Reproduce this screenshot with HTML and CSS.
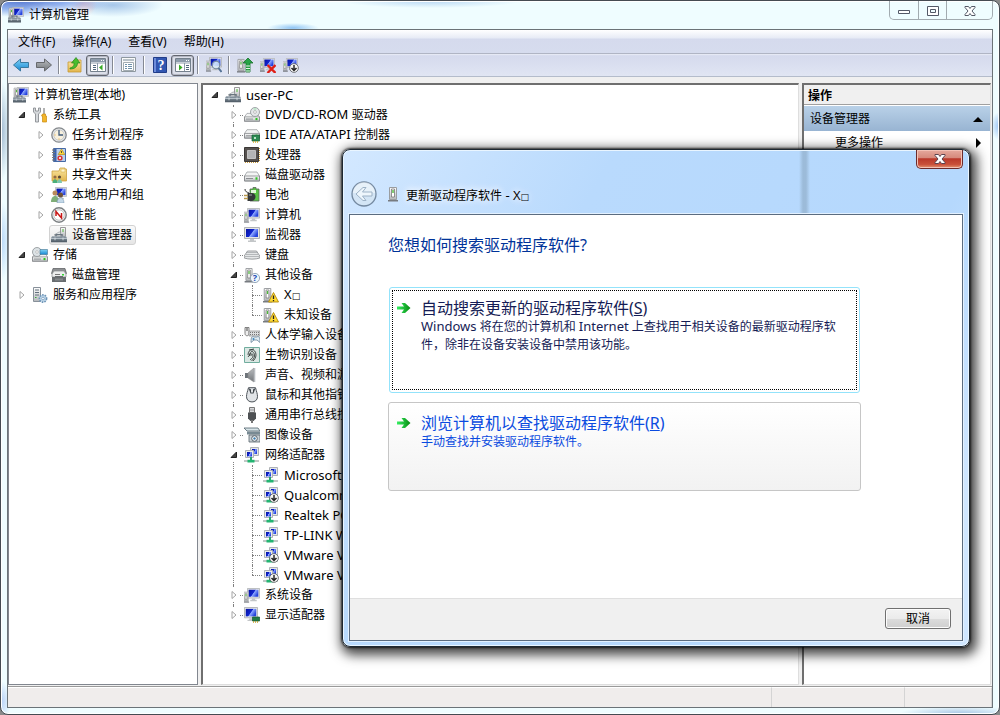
FILE: index.html
```html
<!DOCTYPE html>
<html lang="zh-CN">
<head>
<meta charset="utf-8">
<title>计算机管理</title>
<link rel="stylesheet" href="styles.css">
</head>
<body>
<svg class="sprite" aria-hidden="true">
  <defs>
    <linearGradient id="g-screen" x1="0" y1="0" x2="1" y2="0.5"><stop offset="0" stop-color="#0512a0"/><stop offset="0.55" stop-color="#1226cf"/><stop offset="0.62" stop-color="#8fa9ff"/><stop offset="1" stop-color="#2744dd"/></linearGradient>
    <linearGradient id="g-metal" x1="0" y1="0" x2="0" y2="1"><stop offset="0" stop-color="#ffffff"/><stop offset="1" stop-color="#b4b7ba"/></linearGradient>
    <linearGradient id="g-dark" x1="0" y1="0" x2="0" y2="1"><stop offset="0" stop-color="#93a0ab"/><stop offset="1" stop-color="#4c5862"/></linearGradient>
    <linearGradient id="g-blue" x1="0" y1="0" x2="0" y2="1"><stop offset="0" stop-color="#7fd2f7"/><stop offset="1" stop-color="#1787d2"/></linearGradient>
    <linearGradient id="g-gray" x1="0" y1="0" x2="0" y2="1"><stop offset="0" stop-color="#b9bcbf"/><stop offset="1" stop-color="#73777b"/></linearGradient>
    <linearGradient id="g-folder" x1="0" y1="0" x2="0" y2="1"><stop offset="0" stop-color="#fbe9a6"/><stop offset="1" stop-color="#e2b54c"/></linearGradient>
    <linearGradient id="g-green" x1="0" y1="0" x2="1" y2="0"><stop offset="0" stop-color="#35ef62"/><stop offset="1" stop-color="#078a10"/></linearGradient>
  </defs>
  <symbol id="monitor" viewBox="0 0 16 16" preserveAspectRatio="none"><path d="M.500.500h15v11H.500z" fill="#e4e5e6" stroke="#b0b3b5"/><path d="M2 2h12v8H2z" fill="url(#g-screen)"/><path d="M6 12h4v1.500h2V15H4v-1.500h2z" fill="#c3c6c8"/></symbol>
  <symbol id="tower" viewBox="0 0 16 16" preserveAspectRatio="none"><path d="M4.500 1.500h7v12h-7z" fill="url(#g-metal)" stroke="#9a9da0"/><path d="M6.500 3h3v8h-3z" fill="#fff" stroke="#777" stroke-width=".8"/><path d="M7.300 4h1.400v3H7.300z" fill="#4eb83a"/><path d="M3 14h10v1.500H3z" fill="#777b80"/></symbol>
  <symbol id="toolbox" viewBox="0 0 16 16" preserveAspectRatio="none"><path d="M1 6h14l1 3v6H0V9z" fill="url(#g-dark)"/><path d="M5 6V3.500h6V6" fill="none" stroke="#69757f" stroke-width="1.500"/><path d="M0 9.500h16" stroke="#c5ced5"/><path d="M4 8v4M12 8v4" stroke="#dce2e6"/></symbol>
  <symbol id="i-manage" viewBox="0 0 16 16"><use href="#monitor" x="4" y="0" width="12" height="13"/><use href="#tower" x="-2" y="0" width="11" height="12"/><use href="#toolbox" x="0" y="7" width="13" height="9"/></symbol>
  <symbol id="i-tools" viewBox="0 0 16 16"><path d="M1.500 1v4l2 2v8h3V7l2-2V1L6.500 1v3h-3V1z" fill="#d6d9dc" stroke="#8b8f93" stroke-width=".9"/><path d="M12 1v6" stroke="#999" stroke-width="1.500"/><path d="M10.500 7h3v2h1v6h-4V9h-1z" fill="#f3b62a" stroke="#c98a10" stroke-width=".7"/></symbol>
  <symbol id="i-clock" viewBox="0 0 16 16"><circle cx="8" cy="8" r="7.200" fill="#e6e8ea" stroke="#85898d" stroke-width="1.300"/><circle cx="8" cy="8" r="5.200" fill="#f7f0dd" stroke="#b9bdc0" stroke-width=".7"/><path d="M8 3v5h4" fill="none" stroke="#3f5a7c" stroke-width="1.300"/><path d="M3.500 8h1M8 11.500v1" stroke="#e6a93a"/></symbol>
  <symbol id="i-event" viewBox="0 0 16 16"><path d="M2.500 1.500h12v13h-12z" fill="#b9d0ed" stroke="#4669a5"/><path d="M3 2h2.500v12H3z" fill="#3b63ae"/><path d="M1 3h3M1 5.500h3M1 8h3M1 10.500h3M1 13h3" stroke="#777"/><path d="M10.500 2l3.300 5.500H7.200z" fill="#ffd83b" stroke="#b28400" stroke-width=".6"/><path d="M10.500 4v2" stroke="#333" stroke-width=".8"/><circle cx="9" cy="11" r="2.600" fill="#d93535"/><path d="M8 10l2 2M10 10l-2 2" stroke="#fff" stroke-width=".8"/></symbol>
  <symbol id="i-share" viewBox="0 0 16 16"><path d="M1 4h7l1-3h5v1h1.500v12H1z" fill="url(#g-folder)" stroke="#cda341" stroke-width=".8"/><path d="M10 2h4v3h-4z" fill="#fff6cc" stroke="#d2a43b" stroke-width=".5"/><circle cx="4" cy="10" r="1.600" fill="#936c45"/><circle cx="8.500" cy="10" r="1.600" fill="#5c4b38"/><path d="M1.500 16c0-5 5-5 5 0z" fill="#4baf79"/><path d="M6 16c0-5 5-5 5 0z" fill="#7fc8b0"/></symbol>
  <symbol id="i-users" viewBox="0 0 16 16"><use href="#monitor" x="4" y="0" width="12" height="13"/><circle cx="4" cy="6" r="2.500" fill="#b98a5a"/><circle cx="9.500" cy="8" r="2.500" fill="#6e5138"/><path d="M0 15c0-8 8-8 8 0z" fill="#7fae78"/><path d="M6 16c0-7 7-7 7 0z" fill="#c3d8e8" stroke="#6e8da8" stroke-width=".5"/></symbol>
  <symbol id="i-perf" viewBox="0 0 16 16"><circle cx="8" cy="8" r="7.200" fill="#f2f2f2" stroke="#7c8083" stroke-width="1.400"/><circle cx="8" cy="8" r="5.200" fill="#fff" stroke="#b2b6b9" stroke-width=".8"/><path d="M5 9V4.500L10.500 11V6" fill="none" stroke="#c81616" stroke-width="1.500"/></symbol>
  <symbol id="i-device" viewBox="0 0 16 16"><path d="M9.500.500h5v9h-5z" fill="url(#g-metal)" stroke="#999"/><path d="M12 2v3" stroke="#4fb63b"/><path d="M3 8l5-3h1.500v4z" fill="#e2e5e7" stroke="#8b9094" stroke-width=".6"/><use href="#toolbox" x="0" y="5" width="16" height="11"/></symbol>
  <symbol id="drive" viewBox="0 0 16 16" preserveAspectRatio="none"><path d="M3 5h10l2.500 4v5H.500V9z" fill="#f3f4f4" stroke="#9b9ea1" stroke-width=".8"/><path d="M.500 9h15v5H.500z" fill="url(#g-metal)" stroke="#808386" stroke-width=".8"/><path d="M2 11.500h7" stroke="#8b8e91"/><path d="M11.500 10.300h2v2.400h-2z" fill="#2fc424"/></symbol>
  <symbol id="i-storage" viewBox="0 0 16 16"><use href="#drive" y="2" width="16" height="14"/><circle cx="5" cy="5" r="4.500" fill="#dde3e6" stroke="#8c9194" stroke-width=".8"/><circle cx="5" cy="5" r="1.300" fill="#fff" stroke="#999" stroke-width=".5"/><path d="M8 2.500h7.500v5H8z" fill="url(#g-blue)" stroke="#457390" stroke-width=".6"/></symbol>
  <symbol id="i-disk" viewBox="0 0 16 16"><path d="M2 1.500h12l1.500 5h-15z" fill="#8d9092" stroke="#55585b" stroke-width=".7"/><path d="M3 4h10l2 3v3H1V7z" fill="#eceded" stroke="#888b8d" stroke-width=".7"/><path d="M4 7.500h5" stroke="#777"/><path d="M1 10h3v-1h8v1h3v5H1z" fill="#686c6f"/><path d="M4 11.500h8v2H4z" fill="#85898c"/><path d="M11 7h2v1.500h-2z" fill="#36d436"/></symbol>
  <symbol id="i-services" viewBox="0 0 16 16"><path d="M1.500.500h7v14h-7z" fill="url(#g-metal)" stroke="#88919a"/><path d="M3 3h4M3 5.500h4M3 8h4" stroke="#62707d"/><path d="M3 10h1.500v1H3z" fill="#38aa3c"/><circle cx="11" cy="11.500" r="3.600" fill="#bdd5e9" stroke="#6e95b7" stroke-width="1.600" stroke-dasharray="1.600 1"/><circle cx="11" cy="11.500" r="1.300" fill="#fff" stroke="#6e95b7" stroke-width=".7"/></symbol>
  <symbol id="i-dvd" viewBox="0 0 16 16"><use href="#drive" y="2" width="16" height="14"/><circle cx="11" cy="5" r="4.500" fill="#e4e7e9" stroke="#8b9094" stroke-width=".8"/><path d="M11 5l-2-4h4z" fill="#bfe4ca"/><circle cx="11" cy="5" r="1.400" fill="#fff" stroke="#999" stroke-width=".6"/></symbol>
  <symbol id="i-ide" viewBox="0 0 16 16"><use href="#drive" y="-2" width="16" height="15"/><path d="M8 8h7.500v6H8z" fill="#2c8a52" stroke="#145c30" stroke-width=".7"/><path d="M9 15h6" stroke="#d5ad2b" stroke-width="1.500" stroke-dasharray="1 1"/><path d="M10 10h2v2h-2z" fill="#b9e3c6"/></symbol>
  <symbol id="i-cpu" viewBox="0 0 16 16"><path d="M1 15.300h14M15.300 1v14" stroke="#c89b3e" stroke-width="1.400" stroke-dasharray="1 1"/><path d="M.500.500h14v14H.500z" fill="#55514e" stroke="#3b3836"/><path d="M3.500 3.500h8v8h-8z" fill="#b4b5b6" stroke="#dedede" stroke-width=".7"/></symbol>
  <symbol id="i-battery" viewBox="0 0 16 16"><path d="M6 2h3V.500h3V2h3v12H6z" fill="#58c244" stroke="#5b655a" stroke-width=".8"/><path d="M7 3h5v3H7z" fill="#e1f7d9"/><path d="M1 2c0 3 2 3 4 4" fill="none" stroke="#333"/><path d="M3.500 6h4c3 0 4 2 4 4s-2 4-4 4h-4z" fill="#34383a"/><path d="M5 8h3" stroke="#9da2a5"/><path d="M0 8.500h4M0 11.500h4" stroke="#b9984b" stroke-width="1.300"/></symbol>
  <symbol id="i-pc" viewBox="0 0 16 16"><use href="#monitor" x="3" y="1" width="13" height="14"/><use href="#tower" x="-3" y="4" width="10" height="12"/></symbol>
  <symbol id="i-keyboard" viewBox="0 0 16 16"><path d="M3.500 4h9l3.300 5v2c-4 1.500-11.600 1.500-15.600 0V9z" fill="#e5e7e8" stroke="#85898c" stroke-width=".8"/><path d="M3.500 5.500h9M2.500 7.500h11M1.500 9.500h13" stroke="#85898c" stroke-dasharray="1 1"/></symbol>
  <symbol id="i-other" viewBox="0 0 16 16"><use href="#tower" x="-2" y="0" width="14" height="16"/><circle cx="11" cy="11" r="4.600" fill="#eef5fc" stroke="#8296aa" stroke-width=".8"/></symbol>
  <symbol id="i-warn" viewBox="0 0 16 16"><use href="#tower" x="-3" y="0" width="15" height="16"/><path d="M10.500 5.500l5 9.500h-10z" fill="#ffdb36" stroke="#b58a08" stroke-width=".9" stroke-linejoin="round"/><path d="M10.500 8.500v3.500M10.500 13v1.200" stroke="#222" stroke-width="1.300"/></symbol>
  <symbol id="i-hid" viewBox="0 0 16 16"><path d="M1 .500h4v6c0 3-4 3-4 0z" fill="#eee" stroke="#666" stroke-width=".8"/><path d="M3 1v3" stroke="#444"/><path d="M5 4h11v5H5z" fill="#dcdedf" stroke="#888" stroke-width=".7"/><path d="M6 5.500h9M6 7.500h9" stroke="#777" stroke-dasharray="1 1"/><path d="M7 15.500c0-6 1-6.500 3.500-5.500h2c2.500-1 3.500-.5 3.500 5.500l-3-2.500h-3z" fill="#e1edf3" stroke="#688399" stroke-width=".8"/><circle cx="9.500" cy="12" r="1" fill="#3c83b9"/></symbol>
  <symbol id="i-finger" viewBox="0 0 16 16"><path d="M.500.500h15v15H.500z" fill="#dae7e3" stroke="#71ad9e"/><path d="M4 8c0-7 8-7 8 0 0 3-2 5-3 6M5.500 9c0-6 5-6 5 0 0 2-2 4-3 5M7 9c0-3 2-3 2 0 0 2-2 3-3 4M4 10l3-4M5 3l5-1" fill="none" stroke="#383d3c" stroke-width=".9"/></symbol>
  <symbol id="i-sound" viewBox="0 0 16 16"><path d="M1 6h3v5H1z" fill="#6e747a"/><path d="M4 6l6-5v14l-6-4z" fill="url(#g-gray)" stroke="#888" stroke-width=".6"/><path d="M10.500 1v14" stroke="#b9bdc1" stroke-width="1.600"/></symbol>
  <symbol id="i-mouse" viewBox="0 0 16 16"><path d="M4.500.700h7c1 4 2 6 2 9 0 7-11 7-11 0 0-3 1-5 2-9z" fill="#e1e4e7" stroke="#4d5359"/><path d="M4.500 1l2 5.500h3l2-5.500-2.500 1.500v3h-2v-3z" fill="#3f454a"/></symbol>
  <symbol id="i-usb" viewBox="0 0 16 16"><path d="M5.500.500h5v5h-5z" fill="#d7d9db" stroke="#777"/><path d="M7 2.500v1M9 2.500v1" stroke="#555"/><path d="M4 5.500h8v6L9.500 14h-3L4 11.500z" fill="#4d5053"/><path d="M8 13v3" stroke="#777" stroke-width="2"/></symbol>
  <symbol id="i-imaging" viewBox="0 0 16 16"><path d="M0 1h14l2 3H3z" fill="#d8e4e8" stroke="#52636d" stroke-width=".8"/><path d="M3 4.500h13v3H3z" fill="#788a93"/><path d="M5 8h11v7H5z" fill="#cad1d5" stroke="#59656d" stroke-width=".8"/><circle cx="10.500" cy="11.500" r="2.800" fill="#fff" stroke="#53616a"/><circle cx="10.500" cy="11.500" r="1.200" fill="#3d7baa"/></symbol>
  <symbol id="i-net" viewBox="0 0 16 16"><path d="M6.500.500h8v8h-8z" fill="#e3e5e7" stroke="#aeb2b6"/><path d="M8 2h5v5H8z" fill="url(#g-screen)"/><path d="M1.500 3.500h8v7h-8z" fill="#e9ebec" stroke="#aeb2b6"/><path d="M3 5h5v4.500H3z" fill="url(#g-screen)"/><path d="M0 14h15" stroke="#c2c8c6" stroke-width="2"/><path d="M7 10v4" stroke="#2aa66b" stroke-width="2"/><path d="M3.500 12.800h7v2.700h-7z" fill="#22b571"/></symbol>
  <symbol id="down-badge" viewBox="0 0 16 16"><circle cx="8" cy="8" r="7" fill="#f7f7f7" stroke="#6b6f73" stroke-width="1.500"/><path d="M8 3v8M4 8l4 4 4-4" fill="none" stroke="#222" stroke-width="2.300"/></symbol>
  <symbol id="i-net-off" viewBox="0 0 16 16"><use href="#i-net" width="16" height="16"/><use href="#down-badge" x="6" y="6" width="10" height="10"/></symbol>
  <symbol id="i-display" viewBox="0 0 16 16"><use href="#monitor" x="0" y="0" width="14" height="15"/><path d="M8.500 10h7v4h-7z" fill="#237b45" stroke="#155a2e" stroke-width=".7"/><path d="M9 15h6" stroke="#c9a02a" stroke-width="1.400" stroke-dasharray="1 1"/></symbol>
  <symbol id="i-back" viewBox="0 0 16 16"><path d="M.500 8l7-6v3.500h8v5h-8V14z" fill="url(#g-blue)" stroke="#39799f" stroke-linejoin="round"/></symbol>
  <symbol id="i-forward" viewBox="0 0 16 16"><path d="M15.500 8l-7-6v3.500h-8v5h8V14z" fill="url(#g-gray)" stroke="#66696c" stroke-linejoin="round"/></symbol>
  <symbol id="i-folder-up" viewBox="0 0 16 16"><path d="M1 5h5l1-2h7v12H1z" fill="url(#g-folder)" stroke="#c79a36" stroke-width=".8"/><path d="M3 11c4-1 4-3 4-5H4.500L9 .500 13 6h-2.500c0 4-3 6-7.500 6z" fill="#49bd2e" stroke="#27851b" stroke-width=".7"/></symbol>
  <symbol id="i-tree-pane" viewBox="0 0 16 16"><path d="M.500 1.500h15v13H.500z" fill="#fff" stroke="#74808c"/><path d="M1 2h14v3H1z" fill="#8d9bab"/><path d="M11 3.500h3" stroke="#fff" stroke-dasharray="1 1"/><path d="M1 6h14M7.500 6v8" stroke="#8d9bab"/><path d="M3 8.500h3M3 10.500h3M3 12.500h3" stroke="#51677d"/><path d="M12.500 7.500v6l-3.500-3z" fill="#37aa25"/></symbol>
  <symbol id="i-action-pane" viewBox="0 0 16 16"><path d="M.500 1.500h15v13H.500z" fill="#fff" stroke="#74808c"/><path d="M1 2h14v3H1z" fill="#8d9bab"/><path d="M11 3.500h3" stroke="#fff" stroke-dasharray="1 1"/><path d="M1 6h14M9.500 6v8" stroke="#8d9bab"/><path d="M11 8.500h3M11 10.500h3M11 12.500h3" stroke="#51677d"/><path d="M4 7.500v6l3.500-3z" fill="#37aa25"/></symbol>
  <symbol id="i-props" viewBox="0 0 16 16"><path d="M.500.500h14v14H.500z" fill="#fafafa" stroke="#8e989f"/><path d="M2 3h11" stroke="#b8c2c9" stroke-width="2"/><path d="M2.500 5.500h10v8h-10z" fill="#fff" stroke="#a3acb2"/><path d="M4 7.500h2M4 9.500h2M4 11.500h2M7 7.500h4M7 9.500h4M7 11.500h4" stroke="#6f91aa"/></symbol>
  <symbol id="i-scan" viewBox="0 0 16 16"><use href="#i-pc" y="-1" width="16" height="16"/><circle cx="10" cy="8" r="3.800" fill="#d9edfb" fill-opacity=".8" stroke="#788b9c" stroke-width="1.200"/><path d="M12.500 11l3 4" stroke="#557395" stroke-width="2"/></symbol>
  <symbol id="i-update" viewBox="0 0 16 16"><use href="#tower" x="-3" y="1" width="14" height="15"/><path d="M11 1l5 5h-3v9H9V6H6z" fill="#27a446" stroke="#16702a" stroke-width=".8"/><path d="M9 9h4M9 11.500h4M9 14h4" stroke="#e3f6e4"/></symbol>
  <symbol id="i-uninstall" viewBox="0 0 16 16"><use href="#i-pc" width="15" height="15"/><path d="M7.500 8l8 8M15.500 8l-8 8" stroke="#df1f16" stroke-width="2.400"/></symbol>
  <symbol id="i-disable" viewBox="0 0 16 16"><use href="#i-pc" width="15" height="15"/><use href="#down-badge" x="6" y="6" width="10" height="10"/></symbol>
  <symbol id="i-go" viewBox="0 0 16 16"><path d="M1 6.500h7L5.500 3H9l5.500 5L9 13H5.500L8 9.500H1z" fill="url(#g-green)"/></symbol>
  <symbol id="x-open" viewBox="0 0 8 8"><path d="M6.500 1v5.500H1z" fill="#444" stroke="#222" stroke-linejoin="round"/></symbol>
  <symbol id="x-closed" viewBox="0 0 8 8"><path d="M2 .500v7L6 4z" fill="#fff" stroke="#a4a4a4"/></symbol>
</svg>

<main class="window">
  <header class="titlebar">
    <svg class="icon"><use href="#i-manage"/></svg>
    <h1 class="title">计算机管理</h1>
    <div class="controls">
      <button class="control" aria-label="最小化"><svg viewBox="0 0 14 12"><path d="M1.500 5.500h11v3h-11z" fill="#fff" stroke="#535967"/></svg></button>
      <button class="control" aria-label="最大化"><svg viewBox="0 0 14 12"><path d="M1.500 1.500h11v9h-11zM4.500 4.500h5v3h-5z" fill="#fff" fill-rule="evenodd" stroke="#535967"/></svg></button>
      <button class="control control-wide" aria-label="关闭"><svg viewBox="0 0 14 12"><path d="M2 1.500h3.500L7 3.500l1.500-2H12v1L9 6l3 3.500v1H8.500L7 8.500l-1.500 2H2v-1L5 6 2 2.500z" fill="#fff" stroke="#535967"/></svg></button>
    </div>
  </header>

  <div class="client">
    <nav class="menubar">
      <button class="menu">文件(F)</button>
      <button class="menu">操作(A)</button>
      <button class="menu">查看(V)</button>
      <button class="menu">帮助(H)</button>
    </nav>
    <div class="toolbar" role="toolbar">
      <button class="tool" aria-label="后退"><svg class="icon"><use href="#i-back"/></svg></button>
      <button class="tool" aria-label="前进"><svg class="icon"><use href="#i-forward"/></svg></button>
      <span class="separator"></span>
      <button class="tool" aria-label="向上一级"><svg class="icon"><use href="#i-folder-up"/></svg></button>
      <button class="tool pressed" aria-label="显示/隐藏控制台树"><svg class="icon"><use href="#i-tree-pane"/></svg></button>
      <span class="separator"></span>
      <button class="tool" aria-label="属性"><svg class="icon"><use href="#i-props"/></svg></button>
      <span class="separator"></span>
      <button class="tool" aria-label="帮助"><svg class="icon" viewBox="0 0 16 16"><path d="M1.500.500h13v15h-13z" fill="#3156b1" stroke="#213d88"/><path d="M2 1h2v14H2z" fill="#6d8cda"/><text x="9" y="13" class="help-mark">?</text></svg></button>
      <button class="tool pressed" aria-label="显示/隐藏操作窗格"><svg class="icon"><use href="#i-action-pane"/></svg></button>
      <span class="separator"></span>
      <button class="tool" aria-label="扫描检测硬件改动"><svg class="icon"><use href="#i-scan"/></svg></button>
      <span class="separator"></span>
      <button class="tool" aria-label="更新驱动程序软件"><svg class="icon"><use href="#i-update"/></svg></button>
      <button class="tool" aria-label="卸载"><svg class="icon"><use href="#i-uninstall"/></svg></button>
      <button class="tool" aria-label="禁用"><svg class="icon"><use href="#i-disable"/></svg></button>
    </div>

    <div class="workspace">
      <section class="pane console">
        <ul class="tree">
          <li><div class="row"><svg class="icon"><use href="#i-manage"/></svg><span>计算机管理(本地)</span></div>
            <ul class="branch">
              <li><div class="row"><button class="expander" aria-label="折叠"><svg><use href="#x-open"/></svg></button><svg class="icon"><use href="#i-tools"/></svg><span>系统工具</span></div>
                <ul class="branch">
                  <li><div class="row"><button class="expander" aria-label="展开"><svg><use href="#x-closed"/></svg></button><svg class="icon"><use href="#i-clock"/></svg><span>任务计划程序</span></div></li>
                  <li><div class="row"><button class="expander" aria-label="展开"><svg><use href="#x-closed"/></svg></button><svg class="icon"><use href="#i-event"/></svg><span>事件查看器</span></div></li>
                  <li><div class="row"><button class="expander" aria-label="展开"><svg><use href="#x-closed"/></svg></button><svg class="icon"><use href="#i-share"/></svg><span>共享文件夹</span></div></li>
                  <li><div class="row"><button class="expander" aria-label="展开"><svg><use href="#x-closed"/></svg></button><svg class="icon"><use href="#i-users"/></svg><span>本地用户和组</span></div></li>
                  <li><div class="row"><button class="expander" aria-label="展开"><svg><use href="#x-closed"/></svg></button><svg class="icon"><use href="#i-perf"/></svg><span>性能</span></div></li>
                  <li><div class="row leaf"><div class="selected"><svg class="icon"><use href="#i-device"/></svg><span>设备管理器</span></div></div></li>
                </ul>
              </li>
              <li><div class="row"><button class="expander" aria-label="折叠"><svg><use href="#x-open"/></svg></button><svg class="icon"><use href="#i-storage"/></svg><span>存储</span></div>
                <ul class="branch">
                  <li><div class="row leaf"><svg class="icon"><use href="#i-disk"/></svg><span>磁盘管理</span></div></li>
                </ul>
              </li>
              <li><div class="row"><button class="expander" aria-label="展开"><svg><use href="#x-closed"/></svg></button><svg class="icon"><use href="#i-services"/></svg><span>服务和应用程序</span></div></li>
            </ul>
          </li>
        </ul>
      </section>

      <section class="pane devices">
        <ul class="tree">
          <li><div class="row"><button class="expander" aria-label="折叠"><svg><use href="#x-open"/></svg></button><svg class="icon"><use href="#i-device"/></svg><span class="latin">user-PC</span></div>
            <ul class="branch dotted">
              <li><div class="row"><button class="expander" aria-label="展开"><svg><use href="#x-closed"/></svg></button><svg class="icon"><use href="#i-dvd"/></svg><span><span class="latin">DVD/CD-ROM </span>驱动器</span></div></li>
              <li><div class="row"><button class="expander" aria-label="展开"><svg><use href="#x-closed"/></svg></button><svg class="icon"><use href="#i-ide"/></svg><span><span class="latin">IDE ATA/ATAPI </span>控制器</span></div></li>
              <li><div class="row"><button class="expander" aria-label="展开"><svg><use href="#x-closed"/></svg></button><svg class="icon"><use href="#i-cpu"/></svg><span>处理器</span></div></li>
              <li><div class="row"><button class="expander" aria-label="展开"><svg><use href="#x-closed"/></svg></button><svg class="icon"><use href="#drive"/></svg><span>磁盘驱动器</span></div></li>
              <li><div class="row"><button class="expander" aria-label="展开"><svg><use href="#x-closed"/></svg></button><svg class="icon"><use href="#i-battery"/></svg><span>电池</span></div></li>
              <li><div class="row"><button class="expander" aria-label="展开"><svg><use href="#x-closed"/></svg></button><svg class="icon"><use href="#i-pc"/></svg><span>计算机</span></div></li>
              <li><div class="row"><button class="expander" aria-label="展开"><svg><use href="#x-closed"/></svg></button><svg class="icon"><use href="#monitor"/></svg><span>监视器</span></div></li>
              <li><div class="row"><button class="expander" aria-label="展开"><svg><use href="#x-closed"/></svg></button><svg class="icon"><use href="#i-keyboard"/></svg><span>键盘</span></div></li>
              <li><div class="row"><button class="expander" aria-label="折叠"><svg><use href="#x-open"/></svg></button><svg class="icon" viewBox="0 0 16 16"><use href="#i-other"/><text x="11" y="14" class="badge-mark">?</text></svg><span>其他设备</span></div>
                <ul class="branch dotted">
                  <li><div class="row leaf"><svg class="icon"><use href="#i-warn"/></svg><span><span class="latin">X</span><span class="tofu">□</span></span></div></li>
                  <li><div class="row leaf"><svg class="icon"><use href="#i-warn"/></svg><span>未知设备</span></div></li>
                </ul>
              </li>
              <li><div class="row"><button class="expander" aria-label="展开"><svg><use href="#x-closed"/></svg></button><svg class="icon"><use href="#i-hid"/></svg><span>人体学输入设备</span></div></li>
              <li><div class="row"><button class="expander" aria-label="展开"><svg><use href="#x-closed"/></svg></button><svg class="icon"><use href="#i-finger"/></svg><span>生物识别设备</span></div></li>
              <li><div class="row"><button class="expander" aria-label="展开"><svg><use href="#x-closed"/></svg></button><svg class="icon"><use href="#i-sound"/></svg><span>声音、视频和游</span></div></li>
              <li><div class="row"><button class="expander" aria-label="展开"><svg><use href="#x-closed"/></svg></button><svg class="icon"><use href="#i-mouse"/></svg><span>鼠标和其他指针</span></div></li>
              <li><div class="row"><button class="expander" aria-label="展开"><svg><use href="#x-closed"/></svg></button><svg class="icon"><use href="#i-usb"/></svg><span>通用串行总线控</span></div></li>
              <li><div class="row"><button class="expander" aria-label="展开"><svg><use href="#x-closed"/></svg></button><svg class="icon"><use href="#i-imaging"/></svg><span>图像设备</span></div></li>
              <li><div class="row"><button class="expander" aria-label="折叠"><svg><use href="#x-open"/></svg></button><svg class="icon"><use href="#i-net"/></svg><span>网络适配器</span></div>
                <ul class="branch dotted">
                  <li><div class="row leaf"><svg class="icon"><use href="#i-net"/></svg><span class="latin">Microsoft</span></div></li>
                  <li><div class="row leaf"><svg class="icon"><use href="#i-net-off"/></svg><span class="latin">Qualcomm</span></div></li>
                  <li><div class="row leaf"><svg class="icon"><use href="#i-net"/></svg><span class="latin">Realtek PC</span></div></li>
                  <li><div class="row leaf"><svg class="icon"><use href="#i-net"/></svg><span class="latin">TP-LINK W</span></div></li>
                  <li><div class="row leaf"><svg class="icon"><use href="#i-net-off"/></svg><span class="latin">VMware V</span></div></li>
                  <li><div class="row leaf"><svg class="icon"><use href="#i-net-off"/></svg><span class="latin">VMware V</span></div></li>
                </ul>
              </li>
              <li><div class="row"><button class="expander" aria-label="展开"><svg><use href="#x-closed"/></svg></button><svg class="icon"><use href="#i-pc"/></svg><span>系统设备</span></div></li>
              <li><div class="row"><button class="expander" aria-label="展开"><svg><use href="#x-closed"/></svg></button><svg class="icon"><use href="#i-display"/></svg><span>显示适配器</span></div></li>
            </ul>
          </li>
        </ul>
      </section>

      <aside class="pane actions">
        <h2 class="actions-title">操作</h2>
        <button class="actions-group">设备管理器<svg class="glyph" viewBox="0 0 10 10"><path d="M0 8l5-5 5 5z"/></svg></button>
        <button class="actions-item">更多操作<svg class="glyph" viewBox="0 0 10 10"><path d="M3 0l5 5-5 5z"/></svg></button>
      </aside>
    </div>

    <footer class="statusbar"><span></span><span></span><span></span></footer>
  </div>
</main>

<section class="dialog" role="dialog" aria-labelledby="dialog-title">
  <div class="dialog-top"><button class="dialog-close" aria-label="关闭"><svg viewBox="0 0 14 12"><path d="M2 1.500h3.500L7 3.500l1.500-2H12v1L9 6l3 3.500v1H8.500L7 8.500l-1.500 2H2v-1L5 6 2 2.500z" fill="#fff" stroke="#5c4450"/></svg></button></div>
  <header class="dialog-header">
    <button class="dialog-back" aria-label="后退"><svg viewBox="0 0 26 26"><circle cx="13" cy="13" r="12" fill="#d4e5f3" fill-opacity=".8" stroke="#7489a0" stroke-width="1.300"/><path d="M2 12a11 11 0 0 1 22 0z" fill="#fff" fill-opacity=".45"/><path d="M5 13l7-6.500h3L11.500 11H21v4h-9.500l3.500 4.500h-3z" fill="#eef6fc" stroke="#9db2c6" stroke-linejoin="round"/></svg></button>
    <svg class="icon"><use href="#tower"/></svg>
    <h2 class="dialog-title" id="dialog-title">更新驱动程序软件<span class="latin"> - X</span><span class="tofu">□</span></h2>
  </header>
  <div class="dialog-client">
    <div class="dialog-body">
      <h3 class="question">您想如何搜索驱动程序软件?</h3>
      <button class="choice focused">
        <svg class="icon"><use href="#i-go"/></svg>
        <span class="choice-text"><span class="choice-title">自动搜索更新的驱动程序软件(<u>S</u>)</span><span class="choice-note"><span class="latin">Windows</span> 将在您的计算机和 <span class="latin">Internet</span> 上查找用于相关设备的最新驱动程序软件，除非在设备安装设备中禁用该功能。</span></span>
      </button>
      <button class="choice hovered">
        <svg class="icon"><use href="#i-go"/></svg>
        <span class="choice-text"><span class="choice-title">浏览计算机以查找驱动程序软件(<u>R</u>)</span><span class="choice-note">手动查找并安装驱动程序软件。</span></span>
      </button>
    </div>
    <footer class="dialog-footer"><button class="cancel">取消</button></footer>
  </div>
</section>
</body>
</html>
```
FILE: styles.css
```css
* { box-sizing: border-box; }

body {
  margin: 0;
  height: 100vh;
  overflow: hidden;
  background: #8a8a8a;
  color: #000;
  font: 12px/20px "Noto Sans", "Noto Sans CJK SC", sans-serif;
}

button {
  margin: 0;
  padding: 0;
  border: 0;
  background: none;
  color: inherit;
  font: inherit;
}

h1, h2, h3 { margin: 0; font-size: 12px; font-weight: 400; }

.sprite { position: absolute; width: 0; height: 0; }
.icon { flex: none; width: 16px; height: 16px; }
.latin { font-size: 13px; line-height: 1; white-space: pre; }
.tofu { font: 9px/1 "DejaVu Sans", sans-serif; }
.badge-mark { font: bold 9px "Open Sans", sans-serif; fill: #1c4fb5; text-anchor: middle; }
.help-mark { font: bold 14px "Liberation Serif", serif; fill: #fff; text-anchor: middle; }

/* Main window */
.window {
  display: flex;
  flex-direction: column;
  height: 100vh;
  padding: 0 6px 6px;
  border: 1px solid #454b52;
  border-radius: 8px;
  background:
    radial-gradient(ellipse 90px 16px at 20px 0, #5a7bd0 0, #8fb0ee 50%, transparent 100%),
    radial-gradient(ellipse 14px 14px at 82px 2px, #f0b4b4, transparent),
    radial-gradient(ellipse 50px 12px at 112px 4px, #a6c6ea, transparent),
    radial-gradient(ellipse 26px 5px at 292px 27px, #8fc4f4, transparent),
    radial-gradient(ellipse 90px 7px at 430px 0, #b8d8f4, transparent),
    radial-gradient(ellipse 8px 14px at 100% 125px, #9cc4f4, transparent),
    radial-gradient(ellipse 10px 50px at 0 130px, #9fb8d0, transparent),
    radial-gradient(ellipse 10px 40px at 0 240px, #b6d6f8, transparent),
    radial-gradient(ellipse 10px 20px at 0 700px, #b6d0f8, transparent),
    radial-gradient(ellipse 60px 8px at 96% 100%, #a6c4e4, transparent),
    #effdff;
  box-shadow: inset 0 0 0 1px #fff;
}

.titlebar { display: flex; gap: 5px; height: 28px; padding-left: 1px; }
.titlebar > .icon { margin-top: 6px; }
.title { flex: 1; line-height: 28px; text-shadow: 0 0 5px #fff, 0 0 8px #fff; }

.controls {
  display: flex;
  height: 19px;
  border: 1px solid #a2abb0;
  border-top: 0;
  border-radius: 0 0 5px 5px;
}
.control { width: 28px; padding-top: 1px; line-height: 0; }
.control + .control { border-left: 1px solid #a2abb0; }
.control svg { width: 14px; height: 12px; }
.control-wide { width: 46px; }

.client {
  display: flex;
  flex: 1;
  flex-direction: column;
  min-height: 0;
  border: 1px solid #6b7378;
  background: #f0f0f0;
}

.menubar {
  display: flex;
  gap: 1px;
  height: 24px;
  padding-left: 2px;
  border-bottom: 1px solid #b0b5c4;
  background: linear-gradient(#fff, #e6eaf5 36%, #d5daed 38%, #d6dcee);
}
.menu { padding: 0 8px; line-height: 23px; }

.toolbar {
  display: flex;
  align-items: center;
  height: 23px;
  padding-left: 1px;
  border-bottom: 1px solid #b4bccb;
  background: linear-gradient(#eceff8, #d5daed 8%, #e0e5f3);
}
.tool { display: grid; place-items: center; width: 23px; height: 21px; }
.pressed {
  border: 1px solid #62666f;
  border-radius: 3px;
  background: #dcdfe9;
  box-shadow: inset 0 0 0 1px #b4b8c4;
}
.separator { width: 2px; height: 18px; margin: 0 3px; border-left: 1px solid #858993; border-right: 1px solid #fff; }

.workspace {
  display: grid;
  grid-template-columns: 190px minmax(0, 1fr) 189px;
  column-gap: 3px;
  flex: 1;
  min-height: 0;
  padding: 6px 1px 1px 0;
}
.pane { min-height: 0; overflow: hidden; border: 1px solid #82878f; background: #fff; }
.console { padding-top: 1px; }
.devices { border: 2px solid #6f6f6f; border-right: 1px solid #dedede; border-bottom: 1px solid #dedede; padding-left: 7px; }
.actions { border: 2px solid #6f6f6f; border-right: 1px solid #dedede; border-bottom: 1px solid #dedede; }

/* Trees */
.tree, .branch { margin: 0; padding: 0; list-style: none; }
.branch { padding-left: 19px; }
.console .tree { padding-left: 4px; }
.console .tree > li > .branch { padding-left: 4px; }
.row { position: relative; display: flex; align-items: center; gap: 5px; height: 20px; white-space: nowrap; }
.leaf { padding-left: 15px; }
.expander { display: grid; place-items: center; width: 10px; height: 14px; background: #fff; }
.expander svg { width: 8px; height: 8px; }
.selected {
  display: flex;
  align-items: center;
  gap: 5px;
  height: 20px;
  margin-left: -2px;
  padding: 0 3px 0 1px;
  border: 1px solid #d2d2d2;
  border-radius: 3px;
  background: linear-gradient(#fafafa, #e5e5e5);
}
.dotted > li { position: relative; }
.dotted > li::before {
  content: "";
  position: absolute;
  top: 0;
  bottom: 0;
  left: 4px;
  border-left: 1px dotted #808080;
}
.dotted > li:last-child::before { bottom: auto; height: 10px; }
.dotted > li > .row::before {
  content: "";
  position: absolute;
  top: 10px;
  left: 4px;
  width: 10px;
  border-top: 1px dotted #808080;
}
.dotted .expander { z-index: 1; }

/* Actions pane */
.actions-title { height: 20px; padding-left: 4px; border-bottom: 1px solid #a0a0a0; background: #f0f0f0; font-weight: 700; line-height: 21px; }
.actions-group, .actions-item {
  display: flex;
  align-items: center;
  justify-content: space-between;
  width: 100%;
  padding: 0 7px 0 6px;
}
.actions-group { height: 25px; margin-top: 1px; background: linear-gradient(#b9d1e8, #98b4d2); }
.actions-item { height: 24px; padding-left: 31px; }
.glyph { width: 10px; height: 10px; }

.statusbar { display: grid; grid-template-columns: 1fr 133px 87px; height: 21px; border-top: 1px solid #9a9a9a; background: #f0edec; }
.statusbar span { border-right: 1px solid #d4d4d4; border-top: 1px solid #fff; }

/* Driver update dialog */
.dialog {
  position: absolute;
  top: 149px;
  left: 342px;
  display: flex;
  flex-direction: column;
  width: 628px;
  padding: 0 6px 5px;
  border: 1px solid #1d2832;
  border-radius: 8px;
  background:
    linear-gradient(90deg, transparent 456px, #9cbbd9 460px, #9cbbd9 463px, transparent 467px) 0 0 / 100% 64px no-repeat,
    linear-gradient(120deg, #d3e8ff 0, #b9dafd 30%, #b5d8fd 70%, #cfe6ff 90%);
  box-shadow: inset 0 0 0 1px #e9f5ff, 0 0 2px 1px #000a, 3px 4px 12px 4px #000b;
}
.dialog-top { display: flex; justify-content: flex-end; height: 30px; }
.dialog-close {
  width: 47px;
  height: 19px;
  border: 1px solid #6c2b2b;
  border-top: 0;
  border-radius: 0 0 5px 5px;
  background: linear-gradient(#e5a99d, #d5887a 45%, #b9382a 48%, #c9503a 80%, #e49572);
  box-shadow: inset 0 0 0 1px #f3c2b6;
  line-height: 0;
}
.dialog-close svg { width: 14px; height: 12px; }
.dialog-header { display: flex; align-items: center; height: 34px; padding: 0 0 6px 2px; }
.dialog-back { width: 26px; height: 26px; }
.dialog-back svg { display: block; width: 26px; height: 26px; }
.dialog-header > .icon { margin: 0 4px 0 8px; }
.dialog-title { padding: 4px 1px 0; line-height: 20px; text-shadow: 0 0 6px #fff, 0 0 10px #fff; }
.dialog-client { border: 1px solid #5b6c80; background: #fff; box-shadow: 0 0 0 1px #e3f1ff; }
.dialog-body { min-height: 383px; padding: 18px 101px 0 38px; }
.question { color: #039; font-size: 16px; line-height: 24px; }
.choice {
  display: flex;
  align-items: flex-start;
  gap: 9px;
  width: 473px;
  padding: 10px 20px 0 7px;
  border: 1px solid transparent;
  border-radius: 3px;
  text-align: left;
}
.choice .icon { margin-top: 2px; }
.choice-text { display: flex; flex-direction: column; }
.choice-title { font-size: 16px; line-height: 20px; }
.choice-note { line-height: 18px; }
.choice-note .latin { white-space: normal; }
.focused {
  width: 471px;
  height: 106px;
  margin: 30px 0 0 1px;
  padding-left: 6px;
  border-color: #93e3fb;
  color: #151c55;
  outline: 1px dotted #000;
  outline-offset: -4px;
}
.hovered {
  height: 89px;
  margin-top: 9px;
  border-color: #c6c6c6;
  background: linear-gradient(#fff, #f2f2f2);
  color: #0a4be0;
}
.dialog-footer { display: flex; justify-content: flex-end; height: 42px; padding: 9px 11px 0; border-top: 1px solid #dfdfdf; background: #f0f0f0; }
.cancel {
  width: 66px;
  height: 21px;
  border: 1px solid #707070;
  border-radius: 3px;
  background: linear-gradient(#f3f3f3, #ebebeb 50%, #dcdcdc 51%, #cfcfcf);
  box-shadow: inset 0 0 0 1px #fcfcfc;
  line-height: 18px;
}
```
